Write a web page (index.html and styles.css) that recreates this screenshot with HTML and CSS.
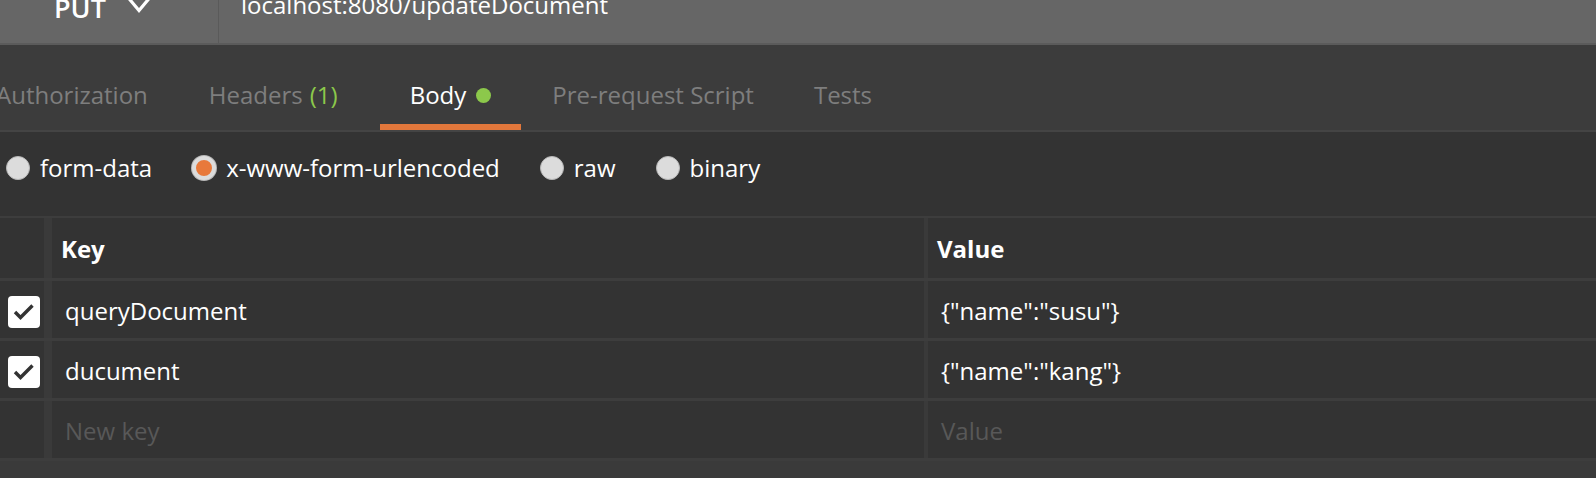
FILE: index.html
```html
<!DOCTYPE html>
<html>
<head>
<meta charset="utf-8">
<link rel="stylesheet" href="styles.css">
</head>
<body>
<div class="topbar">
  <div class="method">
    <span class="method-name">PUT</span>
    <svg class="chev" width="24" height="14" viewBox="0 0 24 14"><polyline points="1.5,-2 12,10.5 22.5,-2" fill="none" stroke="#ffffff" stroke-width="3.2"/></svg>
  </div>
  <div class="url"><span class="url-text">localhost:8080/updateDocument</span></div>
</div>
<div class="tabbar">
  <div class="tabs">
    <div class="tab">Authorization</div>
    <div class="tab">Headers <span class="count">(1)</span></div>
    <div class="tab active">Body <span class="dot"></span></div>
    <div class="tab">Pre-request Script</div>
    <div class="tab">Tests</div>
  </div>
</div>
<div class="modes">
  <label class="mode"><span class="radio"></span>form-data</label>
  <label class="mode"><span class="radio on"></span>x-www-form-urlencoded</label>
  <label class="mode"><span class="radio"></span>raw</label>
  <label class="mode"><span class="radio"></span>binary</label>
</div>
<div class="table">
  <div class="row head">
    <div class="c-check"></div>
    <div class="c-key">Key</div>
    <div class="c-val">Value</div>
  </div>
  <div class="row">
    <div class="c-check"><span class="box"><svg width="32" height="32" viewBox="0 0 32 32"><polyline points="7,16 12.5,21.5 24.5,9.5" fill="none" stroke="#333333" stroke-width="3.4"/></svg></span></div>
    <div class="c-key">queryDocument</div>
    <div class="c-val">{"name":"susu"}</div>
  </div>
  <div class="row">
    <div class="c-check"><span class="box"><svg width="32" height="32" viewBox="0 0 32 32"><polyline points="7,16 12.5,21.5 24.5,9.5" fill="none" stroke="#333333" stroke-width="3.4"/></svg></span></div>
    <div class="c-key">ducument</div>
    <div class="c-val">{"name":"kang"}</div>
  </div>
  <div class="row">
    <div class="c-check"></div>
    <div class="c-key ph">New key</div>
    <div class="c-val ph">Value</div>
  </div>
</div>
<div class="footer"></div>
</body>
</html>
```

FILE: styles.css
```css
* { box-sizing: border-box; }
html, body {
  margin: 0;
  padding: 0;
  background: #3a3a3a;
  font-family: "Open Sans", "Liberation Sans", sans-serif;
  font-size: 24px;
  color: #ffffff;
  overflow: hidden;
}
.topbar {
  display: flex;
  align-items: flex-start;
  height: 45px;
  background: #666666;
  border-bottom: 2px solid #5b5b5b;
  overflow: hidden;
}
.method {
  display: flex;
  align-items: flex-start;
  width: 219px;
  height: 43px;
  padding-left: 54px;
  border-right: 1px solid #5a5a5a;
}
.method-name {
  font-size: 27px;
  font-weight: 600;
  line-height: 37px;
  margin-top: -11px;
}
.chev {
  margin-left: 21px;
  overflow: visible;
}
.url {
  padding-left: 22px;
}
.url-text {
  display: block;
  line-height: 32px;
  margin-top: -11px;
}
.tabbar {
  background: #3c3c3c;
  border-bottom: 2px solid #444444;
  height: 87px;
}
.tabs {
  display: flex;
  margin-left: -34px;
}
.tab {
  display: flex;
  align-items: center;
  padding: 34px 30px 13px;
  line-height: 32px;
  border-bottom: 6px solid transparent;
  color: #7e7e7e;
  white-space: nowrap;
}
.tab + .tab { margin-left: 1px; }
.tab .count {
  color: #8cc84b;
  margin-left: 7px;
}
.tab.active {
  color: #ffffff;
  border-bottom-color: #e2773b;
  margin-left: 12px;
}
.tab.active + .tab { margin-left: 1px; }
.tab:last-child { margin-left: 0; }
.dot {
  display: inline-block;
  width: 15px;
  height: 15px;
  border-radius: 50%;
  background: #8cc84b;
  margin-left: 10px;
}
.modes {
  display: flex;
  align-items: center;
  gap: 40px;
  height: 84px;
  padding: 20px 0 32px 6px;
  background: #333333;
  line-height: 32px;
}
.mode {
  display: flex;
  align-items: center;
  gap: 10px;
}
.radio {
  width: 24px;
  height: 24px;
  border-radius: 50%;
  background: #dcdcdc;
  border: 1px solid #b8b8b8;
}
.radio.on {
  background: #e8793b;
  border: 4px solid #dcdcdc;
  box-shadow: 0 0 0 1px #b8b8b8;
}
.table {
  background: #333333;
  border-top: 2px solid #3d3d3d;
}
.row {
  display: grid;
  grid-template-columns: 48px 880px 1fr;
  height: 60px;
  border-bottom: 3px solid #3d3d3d;
  line-height: 32px;
}
.row.head { height: 63px; font-weight: 700; }
.c-check {
  display: flex;
  align-items: center;
  padding: 5px 0 0 8px;
  border-right: 4px solid #3a3a3a;
}
.c-key, .c-val {
  display: flex;
  align-items: center;
  padding: 3px 0 0 13px;
}
.c-key {
  border-left: 4px solid #3a3a3a;
  border-right: 4px solid #3a3a3a;
}
.head .c-key, .head .c-val { padding: 2px 0 0 9px; }
.box {
  display: block;
  width: 32px;
  height: 32px;
  border-radius: 4px;
  background: #ffffff;
}
.box svg { display: block; }
.ph { color: #585858; }
.footer {
  height: 20px;
  background: #3a3a3a;
}
```
